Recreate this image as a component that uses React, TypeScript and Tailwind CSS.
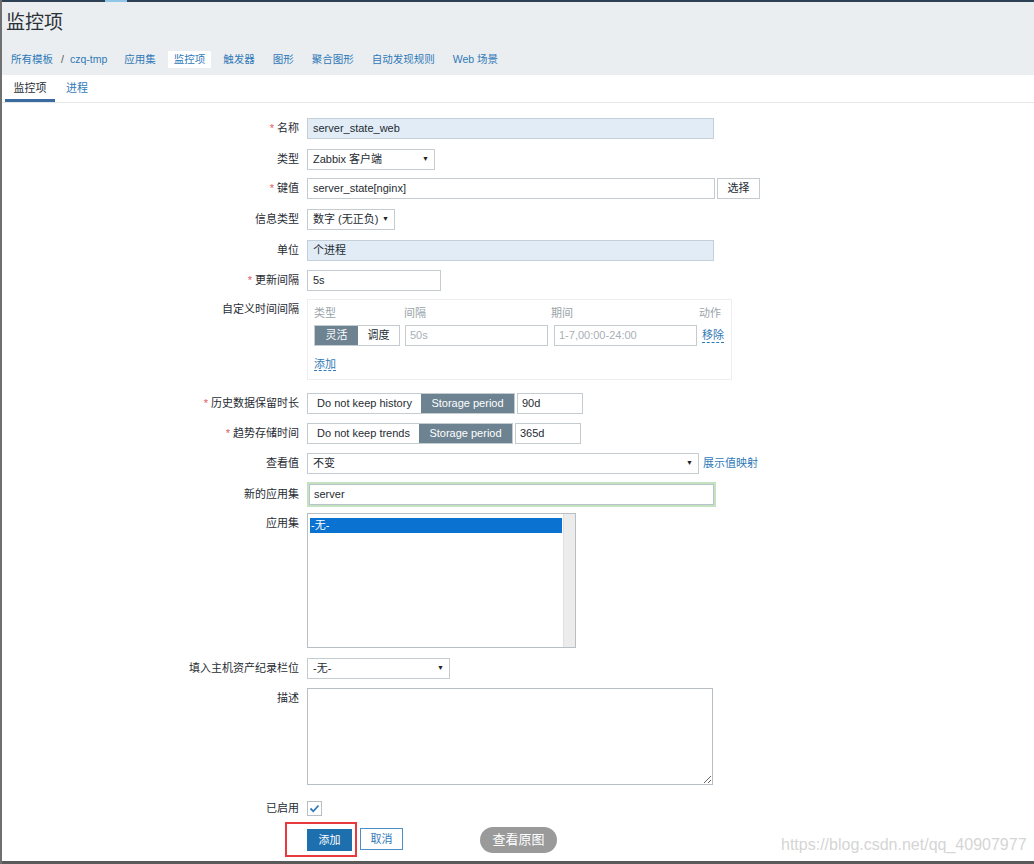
import React from "react";

const font = "font-['Liberation_Sans','Noto_Sans_CJK_SC',sans-serif]";

function Label({ text, req }: { text: string; req?: boolean }) {
  return (
    <div className="w-[305px] shrink-0 pr-[8px] text-right text-[11px] leading-[21px] text-[#1f2c33]">
      {req && <span className="text-[#e45959] mr-[3px]">*</span>}
      {text}
    </div>
  );
}

function Select({ value, w }: { value: string; w: string }) {
  return (
    <div className={`${w} h-[21px] border border-[#c5ccd0] bg-white flex items-center justify-between pl-[5px] pr-[5px] text-[11px] text-[#1f2c33]`}>
      <span className="whitespace-nowrap">{value}</span>
      <span className="text-[7px] text-[#222]">▼</span>
    </div>
  );
}

export default function App() {
  const nav = ["应用集", "监控项", "触发器", "图形", "聚合图形", "自动发现规则", "Web 场景"];

  return (
    <div className={`${font} w-[1034px] h-[864px] overflow-hidden bg-white flex flex-col border-l-2 border-[#707070] relative`}>
      {/* top strip */}
      <div className="h-[2px] bg-[#2c4254] flex shrink-0">
        <div className="w-[103px]" />
        <div className="w-[22px] bg-[#8fc5e8]" />
      </div>

      {/* header */}
      <div className="bg-[#ebeef0] h-[73px] shrink-0 flex flex-col">
        <h1 className="text-[19px] leading-[24px] text-[#2a3238] pl-[4px] pt-[9px]">监控项</h1>
        <div className="flex items-center mt-[16px] text-[10.5px] text-[#2f79b8] h-[17px]">
          <span className="pl-[9px]">所有模板</span>
          <span className="ml-[8px] text-[#555]">/</span>
          <span className="ml-[6px]">czq-tmp</span>
          <div className="flex items-center ml-[11px] gap-[6px]">
            {nav.map((n) => (
              <span key={n} className={n === "监控项" ? "bg-white px-[6px] h-[17px] leading-[17px]" : "px-[6px]"}>
                {n}
              </span>
            ))}
          </div>
        </div>
      </div>

      {/* tabs */}
      <div className="h-[28px] shrink-0 border-b border-[#e6e6e6] flex items-end text-[11px]">
        <div className="ml-[3px] w-[50px] h-full flex items-center justify-center border-b-[3px] border-[#3b6aa0] text-[#1f2c33] pt-[3px]">监控项</div>
        <div className="ml-[11px] h-full flex items-center text-[#2f79b8] pb-[1px]">进程</div>
      </div>

      {/* form */}
      <div className="flex flex-col text-[11px] text-[#1f2c33]">
        <div className="flex mt-[15px]">
          <Label text="名称" req />
          <div className="w-[407px] h-[21px] border border-[#c3d0da] bg-[#e2ecf6] pl-[5px] leading-[19px]">server_state_web</div>
        </div>

        <div className="flex mt-[10px]">
          <Label text="类型" />
          <Select value="Zabbix 客户端" w="w-[128px]" />
        </div>

        <div className="flex mt-[8px]">
          <Label text="键值" req />
          <div className="w-[408px] h-[21px] border border-[#c5ccd0] bg-white pl-[5px] leading-[19px]">server_state[nginx]</div>
          <div className="ml-[2px] w-[43px] h-[21px] border border-[#c5ccd0] bg-white text-center leading-[19px]">选择</div>
        </div>

        <div className="flex mt-[10px]">
          <Label text="信息类型" />
          <Select value="数字 (无正负)" w="w-[88px]" />
        </div>

        <div className="flex mt-[10px]">
          <Label text="单位" />
          <div className="w-[407px] h-[21px] border border-[#c3d0da] bg-[#e2ecf6] pl-[5px] leading-[19px]">个进程</div>
        </div>

        <div className="flex mt-[9px]">
          <Label text="更新间隔" req />
          <div className="w-[134px] h-[21px] border border-[#c5ccd0] bg-white pl-[5px] leading-[19px]">5s</div>
        </div>

        <div className="flex mt-[8px]">
          <Label text="自定义时间间隔" />
          <div className="w-[425px] h-[81px] border border-[#eceeef] pl-[6px] pr-[4px] pt-[5px]">
            <div className="flex text-[#9aa4aa] h-[16px] leading-[16px]">
              <span className="w-[90px]">类型</span>
              <span className="w-[147px]">间隔</span>
              <span className="w-[148px]">期间</span>
              <span>动作</span>
            </div>
            <div className="flex items-center mt-[4px]">
              <div className="flex h-[21px] border border-[#c5ccd0]">
                <span className="w-[43px] bg-[#6d8391] text-white text-center leading-[19px]">灵活</span>
                <span className="w-[41px] bg-white text-center leading-[19px]">调度</span>
              </div>
              <div className="ml-[5px] w-[143px] h-[21px] border border-[#c5ccd0] pl-[4px] leading-[19px] text-[#a8b0b5]">50s</div>
              <div className="ml-[6px] w-[143px] h-[21px] border border-[#c5ccd0] pl-[4px] leading-[19px] text-[#a8b0b5]">1-7,00:00-24:00</div>
              <span className="ml-[5px] text-[#2f79b8] border-b border-dashed border-[#2f79b8] leading-[13px]">移除</span>
            </div>
            <div className="mt-[10px]">
              <span className="text-[#2f79b8] border-b border-dashed border-[#2f79b8] leading-[13px]">添加</span>
            </div>
          </div>
        </div>

        <div className="flex mt-[13px]">
          <Label text="历史数据保留时长" req />
          <div className="flex h-[21px] border border-[#c5ccd0]">
            <span className="w-[113px] bg-white text-center leading-[19px]">Do not keep history</span>
            <span className="w-[93px] bg-[#6d8391] text-white text-center leading-[19px]">Storage period</span>
          </div>
          <div className="ml-[2px] w-[66px] h-[21px] border border-[#c5ccd0] pl-[4px] leading-[19px]">90d</div>
        </div>

        <div className="flex mt-[9px]">
          <Label text="趋势存储时间" req />
          <div className="flex h-[21px] border border-[#c5ccd0]">
            <span className="w-[111px] bg-white text-center leading-[19px]">Do not keep trends</span>
            <span className="w-[93px] bg-[#6d8391] text-white text-center leading-[19px]">Storage period</span>
          </div>
          <div className="ml-[2px] w-[66px] h-[21px] border border-[#c5ccd0] pl-[4px] leading-[19px]">365d</div>
        </div>

        <div className="flex mt-[9px] items-center">
          <Label text="查看值" />
          <Select value="不变" w="w-[392px]" />
          <span className="ml-[4px] text-[#2f79b8]">展示值映射</span>
        </div>

        <div className="flex mt-[8px] items-center">
          <Label text="新的应用集" />
          <div className="w-[409px] h-[25px] border-2 border-[#c5e3c0] flex">
            <div className="flex-1 border border-[#b8c4cb] pl-[4px] leading-[19px]">server</div>
          </div>
        </div>

        <div className="flex mt-[6px]">
          <Label text="应用集" />
          <div className="w-[269px] h-[135px] border border-[#b8bfc4] flex">
            <div className="flex-1 pt-[4px] pl-[2px] pr-[1px]">
              <div className="h-[15px] bg-[#0a72d0] text-white leading-[15px] pl-[1px]">-无-</div>
            </div>
            <div className="w-[12px] bg-[#ececec] border-l border-[#e0e0e0]" />
          </div>
        </div>

        <div className="flex mt-[10px]">
          <Label text="填入主机资产纪录栏位" />
          <Select value="-无-" w="w-[143px]" />
        </div>

        <div className="flex mt-[9px]">
          <Label text="描述" />
          <textarea className="w-[406px] h-[97px] border border-[#b8bfc4] outline-none" defaultValue="" />
        </div>

        <div className="flex mt-[13px] items-center">
          <Label text="已启用" />
          <div className="w-[15px] h-[15px] border border-[#b8bfc4] bg-white flex items-center justify-center">
            <svg width="11" height="11" viewBox="0 0 11 11">
              <path d="M1.5 5.5 L4.3 8.3 L9.5 2.5" fill="none" stroke="#2f79b8" strokeWidth="1.8" />
            </svg>
          </div>
        </div>

        <div className="flex mt-[3px] items-start">
          <div className="w-[283px] shrink-0" />
          <div className="w-[72px] h-[35px] border-2 border-[#e8393c] flex items-center pl-[20px]">
            <div className="w-[45px] h-[22px] bg-[#1d6fae] text-white text-center leading-[22px]">添加</div>
          </div>
          <div className="ml-[3px] mt-[6px] w-[43px] h-[22px] border border-[#4d8fc4] text-[#2f79b8] text-center leading-[20px]">取消</div>
          <div className="ml-[77px] mt-[5px] w-[77px] h-[26px] rounded-full bg-[#9a9a9a] text-white text-[13px] text-center leading-[26px]">查看原图</div>
          <div className="ml-[224px] mt-[14px] text-[16px] leading-[18px] text-[#d5d5d5]">https://blog.csdn.net/qq_40907977</div>
        </div>
      </div>

      <div className="absolute left-0 right-0 bottom-0 h-[3px] bg-[#5a5a5a]" />
    </div>
  );
}
